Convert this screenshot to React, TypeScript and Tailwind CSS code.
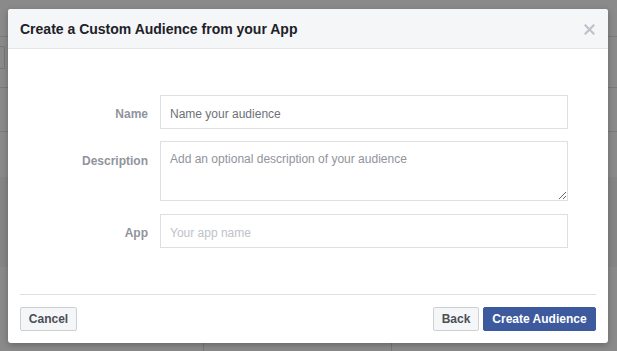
import React from "react";

export default function App() {
  const font = { fontFamily: '"Liberation Sans", Arial, Helvetica, sans-serif' };
  return (
    <div className="relative w-[617px] h-[351px] overflow-hidden bg-[#8a8a8a]" style={font}>
      {/* dimmed page behind the dialog */}
      <div className="flex flex-col h-full">
        <div className="h-[37px] border-b border-[#7a7a7a]" />
        <div className="h-[51px] border-b border-[#7a7a7a] flex items-center">
          <div className="w-[5px] h-[23px] border border-[#777] border-l-0 rounded-r-[2px] -mt-[10px]" />
        </div>
        <div className="h-[44px] border-b border-[#7a7a7a]" />
        <div className="h-[45px]" />
        <div className="h-[90px] bg-[#858585]" />
        <div className="flex-1 flex">
          <div className="w-[204px] border-r border-[#777]" />
          <div className="w-[188px] border-r border-[#777]" />
          <div className="flex-1" />
        </div>
      </div>

      {/* dialog */}
      <div className="absolute left-[8px] top-[9px] w-[600px] h-[334px] bg-white rounded-[3px] shadow-[0_2px_6px_rgba(0,0,0,0.25)] flex flex-col overflow-hidden">
        <div className="h-[40px] shrink-0 bg-[#f5f6f7] border-b border-[#e5e5e5] flex items-center justify-between pl-[12px] pr-[13px]">
          <span className="text-[14px] font-bold text-[#1d2129] leading-none">Create a Custom Audience from your App</span>
          <svg width="11" height="11" viewBox="0 0 11 11" className="mt-[1px]">
            <path d="M1.5 1.5 L9.5 9.5 M9.5 1.5 L1.5 9.5" stroke="#bec2c9" strokeWidth="2.2" strokeLinecap="square" />
          </svg>
        </div>

        <div className="flex-1 pt-[46px] flex flex-col gap-[12px]">
          <div className="flex items-center">
            <label className="w-[140px] text-right text-[12px] font-bold text-[#90949c] mt-[3px]">Name</label>
            <input
              className="ml-[12px] w-[408px] h-[34px] border border-[#dddfe2] px-[9px] pt-[3px] text-[12px] text-[#1d2129] placeholder:text-[#6d7178] outline-none"
              style={font}
              placeholder="Name your audience"
            />
          </div>
          <div className="flex items-start">
            <label className="w-[140px] text-right text-[12px] font-bold text-[#90949c] pt-[11px]">Description</label>
            <textarea
              className="ml-[12px] w-[408px] h-[60px] border border-[#dddfe2] px-[9px] pt-[8px] text-[12px] text-[#1d2129] placeholder:text-[#90949c] outline-none resize-y"
              style={font}
              placeholder="Add an optional description of your audience"
            />
          </div>
          <div className="flex items-center mt-[1px]">
            <label className="w-[140px] text-right text-[12px] font-bold text-[#90949c] mt-[3px]">App</label>
            <input
              className="ml-[12px] w-[408px] h-[34px] border border-[#dddfe2] px-[9px] pt-[3px] text-[12px] text-[#1d2129] placeholder:text-[#bec2c9] outline-none"
              style={font}
              placeholder="Your app name"
            />
          </div>
        </div>

        <div className="mx-[12px] border-t border-[#dddfe2] pt-[12px] pb-[12px] flex items-center">
          <button className="h-[24px] w-[57px] border border-[#ccd0d5] bg-[#f5f6f7] rounded-[2px] text-[12px] font-bold text-[#4b4f56]" style={font}>
            Cancel
          </button>
          <div className="flex-1" />
          <button className="h-[24px] w-[46px] border border-[#ccd0d5] bg-[#f5f6f7] rounded-[2px] text-[12px] font-bold text-[#4b4f56]" style={font}>
            Back
          </button>
          <button className="ml-[4px] h-[24px] w-[113px] border border-[#3b5a9c] bg-[#3d5a9e] rounded-[2px] text-[12px] font-bold text-white" style={font}>
            Create Audience
          </button>
        </div>
      </div>
    </div>
  );
}
